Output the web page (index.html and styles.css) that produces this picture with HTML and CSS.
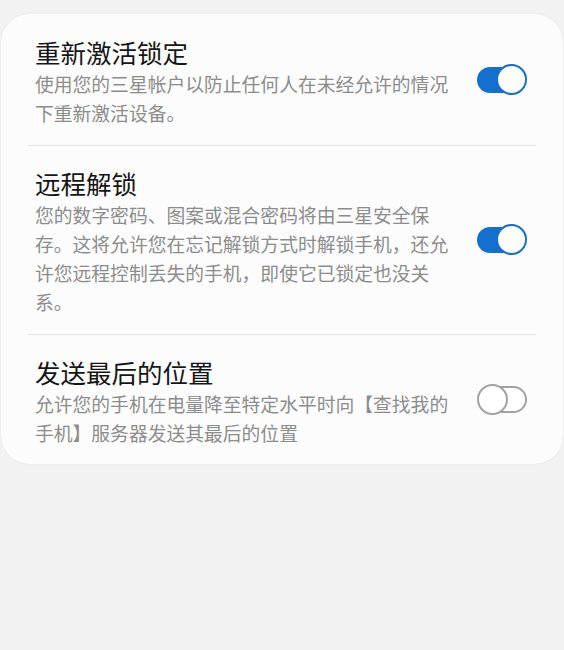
FILE: index.html
```html
<!DOCTYPE html>
<html lang="zh-CN">
<head>
    <meta charset="UTF-8">
    <meta name="viewport" content="width=device-width, initial-scale=1.0">
    <title>远程控制</title>
    <link rel="stylesheet" href="styles.css">
</head>
<body>
    <div class="card">
        <div class="row first">
            <div class="text">
                <div class="title">重新激活锁定</div>
                <div class="desc">使用您的三星帐户以防止任何人在未经允许的情况下重新激活设备。</div>
            </div>
            <span class="switch on"><span class="track"></span><span class="thumb"></span></span>
        </div>
        <div class="row">
            <div class="text">
                <div class="title">远程解锁</div>
                <div class="desc">您的数字密码、图案或混合密码将由三星安全保存。这将允许您在忘记解锁方式时解锁手机，还允许您远程控制丢失的手机，即使它已锁定也没关系。</div>
            </div>
            <span class="switch on"><span class="track"></span><span class="thumb"></span></span>
        </div>
        <div class="row last">
            <div class="text">
                <div class="title">发送最后的位置</div>
                <div class="desc">允许您的手机在电量降至特定水平时向【查找我的手机】服务器发送其最后的位置</div>
            </div>
            <span class="switch"><span class="track"></span><span class="thumb"></span></span>
        </div>
    </div>
</body>
</html>
```

FILE: styles.css
```css
body {
    margin: 0;
    height: 650px;
    background-color: #f2f2f2;
    font-family: "Noto Sans CJK SC", "Noto Sans", sans-serif;
}
.card {
    margin: 14px 1px 0;
    padding: 0 27px;
    background-color: #fcfcfc;
    border-radius: 28px;
    box-shadow: 0 0 1px rgba(0, 0, 0, 0.15);
}
.row {
    display: flex;
    align-items: center;
    padding: 20px 9px 18px 7px;
    border-bottom: 1px solid #e4e4e4;
}
.row.first {
    padding-top: 21px;
}
.row.last {
    border-bottom: none;
    padding-bottom: 17px;
}
.text {
    width: 425px;
}
.title {
    font-size: 25.5px;
    line-height: 34px;
    color: #161616;
}
.desc {
    font-size: 18.8px;
    line-height: 29px;
    color: #8c8c8c;
}
.switch {
    position: relative;
    width: 50px;
    height: 31px;
    margin-left: auto;
    margin-bottom: 3px;
    flex-shrink: 0;
}
.track {
    position: absolute;
    left: 8px;
    right: 0;
    top: 2px;
    height: 27px;
    box-sizing: border-box;
    border: 2px solid #a2a2a2;
    border-radius: 14px;
    background: #fff;
}
.thumb {
    position: absolute;
    left: 0;
    top: 0;
    width: 31px;
    height: 31px;
    box-sizing: border-box;
    border: 2px solid #a2a2a2;
    border-radius: 50%;
    background: #fff;
}
.switch.on .track {
    left: 0;
    right: 8px;
    top: 2.5px;
    height: 26px;
    border: none;
    background: #1470cf;
}
.switch.on .thumb {
    left: auto;
    right: 0;
    border-color: #1470cf;
}
```
